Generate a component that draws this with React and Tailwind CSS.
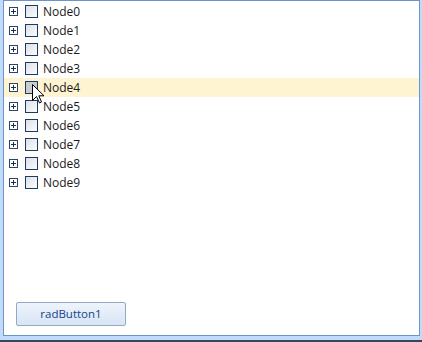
import React from "react";

const nodes = ["Node0","Node1","Node2","Node3","Node4","Node5","Node6","Node7","Node8","Node9"];

function Expander() {
  return (
    <div className="w-[9px] h-[9px] border border-[#2d4668] bg-white flex items-center justify-center relative">
      <div className="absolute left-[1px] top-[3px] w-[5px] h-[1px] bg-[#1b2f4a]" />
      <div className="absolute left-[3px] top-[1px] w-[1px] h-[5px] bg-[#1b2f4a]" />
    </div>
  );
}

function CheckBox({ hover }) {
  return (
    <div className={"w-[13px] h-[13px] border border-[#1c3a62] " + (hover ? "bg-[#c9ccd0]" : "bg-gradient-to-br from-[#dce1e9] to-[#fbfcfd]")} />
  );
}

function Cursor() {
  return (
    <svg className="absolute left-[32px] top-[84px]" width="13" height="20" viewBox="0 0 13 20">
      <path d="M0.5 0.5 L0.5 16.5 L4.5 12.5 L7.5 19 L9.5 18 L6.8 11.8 L12 11.8 Z" fill="#fff" stroke="#000" strokeWidth="1" strokeLinejoin="miter" />
    </svg>
  );
}

export default function App() {
  return (
    <div className="w-[422px] h-[342px] bg-[#c2dbf8] relative" style={{ fontFamily: '"Open Sans", "Liberation Sans", sans-serif' }}>
      <div className="ml-[3px] w-[417px] h-[336px] border border-[#6a94cc] bg-white flex flex-col">
        <div className="flex flex-col pt-[1px]">
          {nodes.map((n, i) => (
            <div key={n} className={"h-[19px] flex items-center " + (i === 4 ? "bg-[#fff4d2]" : "")}>
              <div className="ml-[5px]"><Expander /></div>
              <div className="ml-[7px]"><CheckBox hover={i === 4} /></div>
              <span className="ml-[5px] text-[12px] leading-none text-[#1a1a1a]">{n}</span>
            </div>
          ))}
        </div>
        <div className="mt-auto mb-[9px] ml-[12px]">
          <button className="w-[110px] h-[24px] border border-[#94a9c4] rounded-[2px] bg-gradient-to-b from-[#eef4fc] to-[#d8e5f5] text-[11.5px] text-[#15428b] flex items-center justify-center">
            radButton1
          </button>
        </div>
      </div>
      <div className="absolute left-0 bottom-0 w-[422px] h-[2px] bg-[#34475e]" />
      <Cursor />
    </div>
  );
}
